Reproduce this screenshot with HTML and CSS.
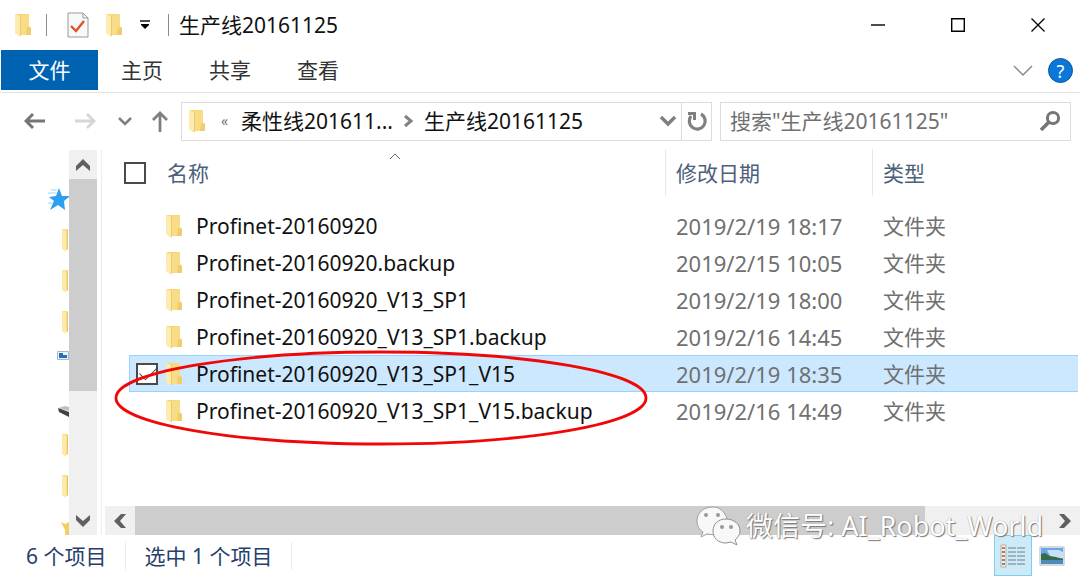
FILE: index.html
```html
<!DOCTYPE html>
<html lang="zh-CN">
  <head>
    <meta charset="UTF-8" />
    <meta name="viewport" content="width=device-width, initial-scale=1.0" />
    <title>生产线20161125</title>
    <link rel="stylesheet" href="styles.css">
  </head>
  <body>
    <svg class="sprite" aria-hidden="true">
      <symbol id="folder" viewBox="0 0 18 24">
        <path d="M1 1H15V13L17 15V22H6L1 20Z" fill="#f6d778" />
        <path d="M6 3L15 1V22H6Z" fill="#f9dd86" />
        <path d="M13 14L17 15V22H12Z" fill="#f0cd6c" />
        <path d="M1 1L6 3V24L1 20Z" fill="#fdebb0" />
        <path d="M6.500 3V23" stroke="#ecca70" fill="none" />
      </symbol>
      <symbol id="side-folder" viewBox="0 0 24 40">
        <path d="M17 9H23V30H19L17 28Z" fill="#f9df8c" />
        <path d="M17 9L21 11V32L17 29Z" fill="#fde9a8" />
        <path d="M22 10H23V29H22Z" fill="#e8c465" />
      </symbol>
    </svg>

    <header class="titlebar">
      <svg class="folder"><use href="#folder" /></svg>
      <span class="divider"></span>
      <button type="button" class="icon-button quick-check" aria-label="属性">
        <svg width="22" height="26" viewBox="0 0 22 26">
          <path d="M1 1H16L21 6V25H1Z" fill="#f9f9f9" stroke="#9a9a9a" />
          <path d="M16 1V6H21" fill="none" stroke="#9a9a9a" />
          <path d="M4 14L9 19L17 9" fill="none" stroke="#dd5228" stroke-width="2.4" />
        </svg>
      </button>
      <button type="button" class="icon-button quick-folder" aria-label="新建文件夹">
        <svg class="folder"><use href="#folder" /></svg>
      </button>
      <button type="button" class="icon-button quick-menu" aria-label="自定义快速访问工具栏">
        <svg width="10" height="10" viewBox="0 0 10 10">
          <path d="M0 1H10" stroke="#000" stroke-width="1.4" />
          <path d="M1 4H9V5L5 9L1 5Z" />
        </svg>
      </button>
      <span class="divider"></span>
      <h1>生产线20161125</h1>
      <div class="window-buttons">
        <button type="button" class="icon-button" aria-label="最小化">
          <svg width="16" height="16" viewBox="0 0 16 16"><path d="M1 8H15" stroke="#000" stroke-width="1.4" /></svg>
        </button>
        <button type="button" class="icon-button" aria-label="最大化">
          <svg width="16" height="16" viewBox="0 0 16 16"><path d="M1.7 1.7H14.3V14.3H1.7Z" fill="none" stroke="#000" stroke-width="1.4" /></svg>
        </button>
        <button type="button" class="icon-button" aria-label="关闭">
          <svg width="16" height="16" viewBox="0 0 16 16"><path d="M1.5 1.5L14.5 14.5M14.5 1.5L1.5 14.5" stroke="#000" stroke-width="1.3" /></svg>
        </button>
      </div>
    </header>

    <nav class="ribbon">
      <button type="button" class="tab active">文件</button>
      <button type="button" class="tab">主页</button>
      <button type="button" class="tab">共享</button>
      <button type="button" class="tab">查看</button>
      <div class="ribbon-tools">
        <button type="button" class="icon-button" aria-label="展开功能区">
          <svg width="20" height="12" viewBox="0 0 20 12"><path d="M1 1L10 10L19 1" fill="none" stroke="#8a8a8a" stroke-width="1.5" /></svg>
        </button>
        <button type="button" class="help">?</button>
      </div>
    </nav>

    <div class="location">
      <div class="history">
        <button type="button" class="icon-button" aria-label="后退">
          <svg width="22" height="18" viewBox="0 0 22 18"><path d="M2 9H21M9 2L2 9L9 16" fill="none" stroke="#757575" stroke-width="3" /></svg>
        </button>
        <button type="button" class="icon-button" aria-label="前进">
          <svg width="22" height="18" viewBox="0 0 22 18"><path d="M1 9H20M13 2L20 9L13 16" fill="none" stroke="#d6d6d6" stroke-width="2.8" /></svg>
        </button>
        <button type="button" class="icon-button" aria-label="最近的位置">
          <svg width="14" height="9" viewBox="0 0 14 9"><path d="M1 1L7 7L13 1" fill="none" stroke="#808080" stroke-width="2.6" /></svg>
        </button>
        <button type="button" class="icon-button" aria-label="上移">
          <svg width="16" height="22" viewBox="0 0 16 22"><path d="M8 22V3M1 10L8 3L15 10" fill="none" stroke="#808080" stroke-width="2.8" /></svg>
        </button>
      </div>
      <div class="address">
        <svg class="folder"><use href="#folder" /></svg>
        <span class="overflow">«</span>
        <a href="#">柔性线201611...</a>
        <svg class="crumb-arrow" width="9" height="14" viewBox="0 0 9 14"><path d="M1 2L7 7L1 12" fill="none" stroke="#808080" stroke-width="3" /></svg>
        <a href="#">生产线20161125</a>
        <button type="button" class="icon-button address-menu" aria-label="以前的位置">
          <svg width="18" height="12" viewBox="0 0 18 12"><path d="M2 2L9 9L16 2" fill="none" stroke="#808080" stroke-width="3.4" /></svg>
        </button>
        <button type="button" class="icon-button refresh" aria-label="刷新">
          <svg width="22" height="22" viewBox="0 0 22 22">
            <path d="M15 4A8 8 0 1 1 5 6" fill="none" stroke="#808080" stroke-width="3.2" />
            <path d="M2 2H10V10H7V5H2Z" fill="#808080" />
          </svg>
        </button>
      </div>
      <form class="search">
        <input type="text" aria-label="搜索" placeholder="搜索&quot;生产线20161125&quot;" />
        <button type="button" class="icon-button" aria-label="开始搜索">
          <svg width="22" height="22" viewBox="0 0 22 22">
            <circle cx="14" cy="8" r="5.6" fill="none" stroke="#757575" stroke-width="3" />
            <path d="M10 12L2 20" stroke="#757575" stroke-width="3.8" />
          </svg>
        </button>
      </form>
    </div>

    <main class="content">
      <ul class="sidebar">
        <li>
          <svg width="24" height="40" viewBox="0 0 24 40">
            <path d="M14 9L17 17H24V18L19 22L20 31L13 26L5 31L9 22L4 18L11 17Z" fill="#2ba0ee" />
            <path d="M6 11H12M3 14H11M3 24H8" stroke="#9fd4f7" />
          </svg>
        </li>
        <li><svg width="24" height="40"><use href="#side-folder" /></svg></li>
        <li><svg width="24" height="40"><use href="#side-folder" /></svg></li>
        <li><svg width="24" height="40"><use href="#side-folder" /></svg></li>
        <li>
          <svg width="24" height="40" viewBox="0 0 24 40">
            <path d="M12.5 8.5H23.5V16.5H12.5Z" fill="#e9f3fb" stroke="#9dbad3" />
            <path d="M14 10H18V12H22V15H14Z" fill="#2c6fae" />
          </svg>
        </li>
        <li>
          <svg width="24" height="40" viewBox="0 0 24 40">
            <path d="M13 24L20 22L24 23V27L20 26Z" fill="#bcc0c0" />
            <path d="M13 24L24 28V33L14 28Z" fill="#3d4444" />
          </svg>
        </li>
        <li><svg width="24" height="40"><use href="#side-folder" /></svg></li>
        <li><svg width="24" height="40"><use href="#side-folder" /></svg></li>
        <li><svg width="24" height="40" viewBox="0 0 24 40"><path d="M16 15L20 17L24 15V32H20V23Z" fill="#f3cd65" /></svg></li>
      </ul>
      <div class="scrollbar vertical">
        <button type="button" class="icon-button" aria-label="向上滚动">
          <svg width="14" height="12" viewBox="0 0 14 12"><path d="M0 7L7 0L14 7V12L7 6L0 12Z" fill="#606060" /></svg>
        </button>
        <div class="thumb"></div>
        <button type="button" class="icon-button" aria-label="向下滚动">
          <svg width="14" height="12" viewBox="0 0 14 12"><path d="M0 0L7 6L14 0V5L7 12L0 5Z" fill="#606060" /></svg>
        </button>
      </div>

      <section class="files">
        <table>
          <thead>
            <tr>
              <th class="name">
                <div class="cell">
                  <input type="checkbox" aria-label="全选" />
                  名称
                </div>
                <svg class="sort" width="12" height="7" viewBox="0 0 12 7"><path d="M1 6L6 1L11 6" fill="none" stroke="#666" /></svg>
              </th>
              <th class="date">修改日期</th>
              <th class="type">类型</th>
            </tr>
          </thead>
          <tbody>
            <tr>
              <td>
                <label class="cell"><input type="checkbox" /><svg class="folder"><use href="#folder" /></svg>Profinet-20160920</label>
              </td>
              <td class="modified">2019/2/19 18:17</td>
              <td>文件夹</td>
            </tr>
            <tr>
              <td>
                <label class="cell"><input type="checkbox" /><svg class="folder"><use href="#folder" /></svg>Profinet-20160920.backup</label>
              </td>
              <td class="modified">2019/2/15 10:05</td>
              <td>文件夹</td>
            </tr>
            <tr>
              <td>
                <label class="cell"><input type="checkbox" /><svg class="folder"><use href="#folder" /></svg>Profinet-20160920_V13_SP1</label>
              </td>
              <td class="modified">2019/2/19 18:00</td>
              <td>文件夹</td>
            </tr>
            <tr>
              <td>
                <label class="cell"><input type="checkbox" /><svg class="folder"><use href="#folder" /></svg>Profinet-20160920_V13_SP1.backup</label>
              </td>
              <td class="modified">2019/2/16 14:45</td>
              <td>文件夹</td>
            </tr>
            <tr class="selected">
              <td>
                <label class="cell"><input type="checkbox" checked /><svg class="folder"><use href="#folder" /></svg>Profinet-20160920_V13_SP1_V15</label>
              </td>
              <td class="modified">2019/2/19 18:35</td>
              <td>文件夹</td>
            </tr>
            <tr>
              <td>
                <label class="cell"><input type="checkbox" /><svg class="folder"><use href="#folder" /></svg>Profinet-20160920_V13_SP1_V15.backup</label>
              </td>
              <td class="modified">2019/2/16 14:49</td>
              <td>文件夹</td>
            </tr>
          </tbody>
        </table>

        <div class="scrollbar horizontal">
          <button type="button" class="icon-button" aria-label="向左滚动">
            <svg width="12" height="14" viewBox="0 0 12 14"><path d="M7 0H12L6 7L12 14H7L0 7Z" fill="#606060" /></svg>
          </button>
          <div class="thumb"></div>
          <button type="button" class="icon-button" aria-label="向右滚动">
            <svg width="12" height="14" viewBox="0 0 12 14"><path d="M5 0H0L6 7L0 14H5L12 7Z" fill="#606060" /></svg>
          </button>
        </div>

        <svg class="circle-mark" width="536" height="98" viewBox="0 0 536 98">
          <ellipse cx="268" cy="49" rx="265" ry="46" fill="none" stroke="#f00808" stroke-width="2.8" />
        </svg>
      </section>
    </main>

    <footer class="statusbar">
      <span>6 个项目</span>
      <span>选中 1 个项目</span>
      <div class="views">
        <button type="button" class="icon-button active" aria-label="详细信息">
          <svg width="26" height="24" viewBox="0 0 26 24">
            <path d="M1 1H6V23H1Z" fill="#f7f0ea" stroke="#b9aea6" />
            <path d="M2 4H5M2 12H5" stroke="#c97a5b" stroke-width="2" />
            <path d="M2 8H5M2 16H5M2 20H5" stroke="#8a8580" stroke-width="2" />
            <path d="M8 4H25M8 8H25M8 12H25M8 16H25M8 20H25" stroke="#6d7f8a" stroke-dasharray="8 1" />
          </svg>
        </button>
        <button type="button" class="icon-button" aria-label="大图标">
          <svg width="26" height="20" viewBox="0 0 26 20">
            <path d="M1 1H25V19H1Z" fill="#fff" stroke="#a9b4bd" />
            <path d="M2 2H24V13H2Z" fill="#6aa5ea" />
            <path d="M8 4H20L24 6V12H12Z" fill="#c5e0f8" />
            <path d="M2 8L6 7L11 10L17 11L24 13V15H2Z" fill="#356b4a" />
            <path d="M2 14H24V18H2Z" fill="#4b8cb8" />
          </svg>
        </button>
      </div>
    </footer>

    <div class="watermark">
      <svg width="46" height="42" viewBox="0 0 46 42">
        <path d="M18 2C8 2 2 8 2 16C2 21 4 24 8 27L6 32L12 29L20 30L32 14C30 7 25 2 18 2Z" fill="#f8f8f8" stroke="#a0a0a0" />
        <path d="M31 14C23 14 18 19 18 26C18 33 23 38 31 38L36 37L42 40L40 35C43 32 45 30 45 26C45 19 39 14 31 14Z" fill="#f8f8f8" stroke="#909090" />
        <circle cx="11" cy="10" r="2" fill="#999" /><circle cx="23" cy="10" r="2" fill="#999" />
        <circle cx="27" cy="22" r="2" fill="#999" /><circle cx="36" cy="22" r="2" fill="#999" />
      </svg>
      <span>微信号: AI_Robot_World</span>
    </div>
  </body>
</html>
```

FILE: styles.css
```css
* {
  box-sizing: border-box;
}
body {
  display: flex;
  flex-direction: column;
  height: 100vh;
  margin: 0;
  overflow: hidden;
  background-color: #fff;
  color: #111;
  font-family: "Noto Sans", "Noto Sans CJK SC", sans-serif;
  font-size: 21px;
  line-height: 28px;
}
button,
input {
  font: inherit;
}
svg {
  display: block;
  flex: none;
}
.sprite {
  position: absolute;
  width: 0;
  height: 0;
}
.icon-button {
  display: flex;
  align-items: center;
  justify-content: center;
  padding: 0;
  border: none;
  background: none;
}
.folder {
  width: 18px;
  height: 24px;
}

/* title bar */
.titlebar {
  display: flex;
  align-items: center;
  height: 50px;
  padding: 0 24px 0 14px;
}
.divider {
  width: 1px;
  height: 22px;
  margin-left: 14px;
  background-color: #8c8c8c;
}
.quick-check {
  margin-left: 20px;
}
.quick-folder {
  margin-left: 16px;
}
.quick-menu {
  margin: 0 4px 0 17px;
}
.titlebar h1 {
  margin: 0 0 0 10px;
  font-size: 21px;
  font-weight: 400;
}
.window-buttons {
  display: flex;
  gap: 64px;
  margin-left: auto;
  padding-right: 10px;
}

/* ribbon */
.ribbon {
  display: flex;
  height: 43px;
  padding-left: 1px;
  border-bottom: 1px solid #e2e2e2;
}
.tab {
  height: 40px;
  padding: 0 23px;
  border: none;
  background: none;
  color: #333;
}
.tab.active {
  width: 97px;
  background-color: #0063b1;
  color: #fff;
}
.ribbon-tools {
  display: flex;
  align-items: center;
  gap: 15px;
  height: 41px;
  margin-left: auto;
  padding-right: 7px;
}
.help {
  width: 25px;
  height: 25px;
  padding: 0;
  border: 1px solid #0a56a0;
  border-radius: 50%;
  background-color: #0b77d8;
  color: #fff;
  font-size: 18px;
  line-height: 22px;
}

/* address and search */
.location {
  display: flex;
  align-items: center;
  height: 56px;
  padding-right: 9px;
}
.history {
  display: flex;
  align-items: center;
  gap: 28px;
  width: 181px;
  padding-left: 24px;
}
.history .icon-button:nth-child(3) {
  margin-left: -6px;
}
.history .icon-button:nth-child(4) {
  margin-left: -8px;
}
.address {
  display: flex;
  flex: 1;
  align-items: center;
  height: 39px;
  padding-left: 6px;
  border: 1px solid #dcdcdc;
}
.address a {
  color: #111;
  text-decoration: none;
}
.overflow {
  width: 35px;
  padding-left: 15px;
  font-size: 14px;
  color: #777;
}
.crumb-arrow {
  margin: 0 11px;
}
.address-menu {
  margin-left: auto;
  margin-right: 4px;
}
.refresh {
  width: 30px;
  height: 100%;
  border-left: 1px solid #dcdcdc;
}
.search {
  display: flex;
  align-items: center;
  width: 351px;
  height: 39px;
  margin-left: 8px;
  padding: 0 9px;
  border: 1px solid #dcdcdc;
}
.search input {
  flex: 1;
  min-width: 0;
  padding: 0;
  border: none;
  outline: none;
  background: none;
}
.search input::placeholder {
  color: #707070;
}

/* folder pane and file list */
.content {
  display: flex;
  flex: 1;
  min-height: 0;
}
.sidebar {
  width: 69px;
  margin: 0;
  padding: 30px 0 0;
  overflow: hidden;
  list-style: none;
}
.sidebar li {
  display: flex;
  justify-content: flex-end;
  height: 41px;
}
.scrollbar {
  display: flex;
  background-color: #f0f0f0;
}
.scrollbar .thumb {
  background-color: #cdcdcd;
}
.vertical {
  flex-direction: column;
  width: 28px;
  margin-top: 1px;
}
.vertical .icon-button {
  height: 29px;
}
.vertical .thumb {
  height: 212px;
}
.scrollbar .icon-button:last-child {
  margin-top: auto;
}
.files {
  position: relative;
  display: flex;
  flex: 1;
  flex-direction: column;
  margin-left: 4px;
  border-left: 1px solid #ececec;
}
.files table {
  width: calc(100% - 29px);
  margin: 0 2px 0 27px;
  border-collapse: separate;
  border-spacing: 0;
  table-layout: fixed;
}
.files th {
  position: relative;
  height: 47px;
  padding: 0 10px;
  color: #4c607a;
  font-weight: 400;
  text-align: left;
}
.files th + th {
  border-left: 1px solid #e8e8e8;
}
.files thead::after {
  content: "";
  display: block;
  height: 11px;
}
.files th.name {
  width: 536px;
  padding: 0;
}
.files th.date {
  width: 207px;
}
.files th input {
  margin: 0 21px 0 -5px;
}
.sort {
  position: absolute;
  top: 4px;
  left: 260px;
}
.files td {
  height: 37px;
  padding: 0 11px;
  border: 0 solid #99d1ff;
  color: #707070;
}
.files td:first-child {
  padding: 0 7px;
  color: #111;
}
.files .modified {
  font-size: 22px;
}
.cell {
  display: flex;
  align-items: center;
}
.cell .folder {
  margin: 0 13px 0 7px;
}
.cell input {
  flex: none;
  width: 22px;
  height: 22px;
  margin: 0;
  border: 2px solid #4a4a4a;
  appearance: none;
  background-color: #fff;
}
td .cell input:not(:checked) {
  visibility: hidden;
}
.cell input:checked::after {
  content: "";
  display: block;
  width: 15px;
  height: 8px;
  margin: 2px 0 0 2px;
  border: solid #444;
  border-width: 0 0 1px 1px;
  transform: rotate(-45deg);
}
.selected td {
  border-width: 1px 0;
  background-color: #cce8ff;
}
.selected td:first-child {
  padding-left: 6px;
  border-left-width: 1px;
}
.horizontal {
  height: 29px;
  margin: auto 0 0 3px;
}
.horizontal .icon-button {
  width: 30px;
}
.horizontal .icon-button:last-child {
  margin: 0 0 0 auto;
}
.horizontal .thumb {
  width: 81%;
}
.circle-mark {
  position: absolute;
  top: 200px;
  left: 11px;
  pointer-events: none;
}

/* status bar */
.statusbar {
  display: flex;
  align-items: center;
  height: 42px;
  padding: 0 10px 0 26px;
  color: #26406b;
}
.statusbar span {
  padding-right: 19px;
  border-right: 1px solid #ececec;
}
.statusbar span + span {
  padding-left: 18px;
}
.views {
  display: flex;
  gap: 2px;
  height: 100%;
  margin-left: auto;
}
.views .icon-button {
  width: 36px;
  height: 41px;
}
.views .active {
  width: 38px;
  border: 1px solid #7fcdee;
  background-color: #cdeaf8;
}

/* account name over the lower right corner */
.watermark {
  position: absolute;
  right: 37px;
  bottom: 30px;
  display: flex;
  align-items: center;
  gap: 5px;
  color: #fff;
  font-size: 27px;
  line-height: 40px;
  text-shadow: 1px 1px 1px #777, 0 0 1px #999;
}
```
